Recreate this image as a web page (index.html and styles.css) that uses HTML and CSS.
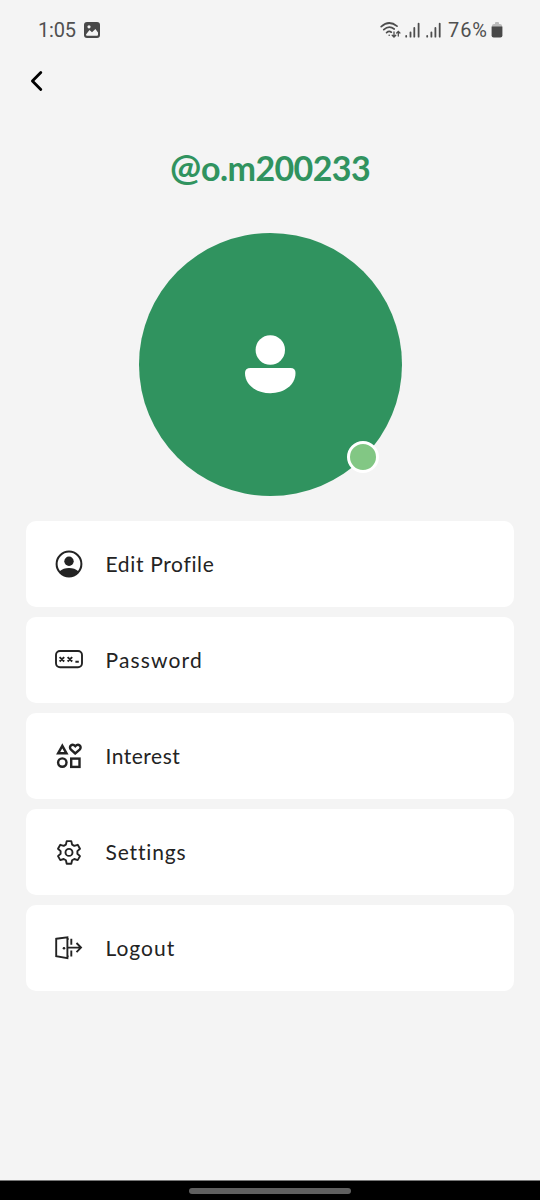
FILE: index.html
```html
<!DOCTYPE html>
<html lang="en">
<head>
<meta charset="utf-8">
<title>Profile</title>
<link rel="stylesheet" href="styles.css">
</head>
<body>
<div class="screen">
  <header class="status">
    <span class="clock">1:05</span>
    <svg class="photo" width="16" height="16" viewBox="0 0 16 16"><rect width="16" height="16" rx="3" fill="#494949"/><circle cx="5" cy="4.8" r="1.6" fill="#f4f4f4"/><path d="M2 12.5 5.5 8l2.5 2.3L11.4 7l2.6 3.5v2.2q0 1-1 1H3q-1 0-1-1.2Z" fill="#f4f4f4"/></svg>
    <svg class="signals" width="63" height="20" viewBox="0 0 63 20" fill="none" stroke="#4d4d4d" stroke-width="1.7" stroke-linecap="round">
      <path d="M1.2 6.6Q9-.4 17 6.2M3.8 9.7Q9 5 14.2 9M6.6 12.6Q9.1 10.6 11.3 12.2"/>
      <circle cx="9.2" cy="15.2" r=".8" fill="#4d4d4d" stroke="none"/>
      <path d="M14 12v5m-1.8-1.7L14 17l1.8-1.7M18.3 16v-4.5m-1.6 1.5 1.6-1.6 1.6 1.6" stroke-width="1.3"/>
      <path d="M26.2 16v.7M30.5 12.3v4.4M34.3 8v8.7M38.6 3.6v13.1M47.2 16v.7M51.4 12.3v4.4M55.4 8v8.7M59.7 3.6v13.1" stroke-width="1.8"/>
    </svg>
    <span class="percent">76%</span>
    <svg class="battery" width="12" height="16" viewBox="0 0 12 16"><path d="M1 5V3.5Q1 2 3 2h1V1q0-1 1-1h2q1 0 1 1v1h1q2 0 2 1.5V5Z" fill="#bababa"/><path d="M.6 4.5h10.8v9q0 2-2 2H2.6q-2 0-2-2Z" fill="#484848"/></svg>
  </header>
  <nav class="back"><svg width="14" height="22" viewBox="0 0 14 22" fill="none" stroke="#000" stroke-width="2.8" stroke-linecap="round" stroke-linejoin="round"><path d="M11.8 2.4 3.4 11l8.4 8.6"/></svg></nav>
  <h1 class="username"><span class="at">@</span>o.m200233</h1>
  <div class="avatar">
    <svg width="51" height="59" viewBox="0 0 51 59" fill="#fff"><circle cx="25.3" cy="15" r="14.7"/><path d="M5.5 33h40q5 0 5 5c0 12-11.5 20.2-25.2 20.2S0 50 0 38q0-5 5.5-5Z"/></svg>
    <span class="presence"></span>
  </div>
  <main class="menu">
    <a class="item"><svg class="icon" viewBox="0 0 30 30" fill="none" stroke="#232323"><circle cx="15" cy="15" r="12.4" stroke-width="2"/><circle cx="15" cy="12.3" r="4.7" fill="#232323" stroke="none"/><path d="M5.2 22.4Q9.5 19 15 19t9.8 3.4Q21 27.5 15 27.5T5.2 22.4Z" fill="#232323" stroke="none"/></svg><span class="label edit">Edit Profile</span></a>
    <a class="item"><svg class="icon" viewBox="0 0 30 30" fill="none" stroke="#232323" stroke-width="1.9"><rect x="2" y="6" width="26" height="16.3" rx="4"/><path d="m5.6 12.1 4.6 4.4m0-4.4-4.6 4.4m8-4.4 4.6 4.4m0-4.4-4.6 4.4m7.8.2h3.4"/></svg><span class="label password">Password</span></a>
    <a class="item"><svg class="icon" viewBox="0 0 30 30" fill="none" stroke="#232323" stroke-width="2.4"><path d="M8.3 4.8 4.1 12.3h8.4Z"/><path d="M21.3 12.5 17 8.6c-3-3.2 1.2-6.5 4.3-3.4 3.1-3.1 7.3.2 4.3 3.4Z"/><circle cx="8.3" cy="21.6" r="4.2"/><rect x="17.2" y="17.6" width="8.3" height="8.3"/></svg><span class="label interest">Interest</span></a>
    <a class="item"><svg class="icon" viewBox="0 0 30 30" fill="none" stroke="#232323" stroke-width="1.9" stroke-linejoin="round"><path d="M12.7 4.1h4.6l.8 3.5 2.2 1.3 3.4-1.1L26 11.7l-2.6 2.4v2.6l2.6 2.4-2.3 4-3.4-1.1-2.2 1.3-.8 3.4h-4.6l-.8-3.4L9.7 22l-3.4 1.1-2.3-4 2.6-2.4v-2.6L4 11.7l2.3-3.9 3.4 1.1 2.2-1.3Z"/><circle cx="15" cy="15.4" r="3.5"/></svg><span class="label settings">Settings</span></a>
    <a class="item"><svg class="icon" viewBox="0 0 30 30" fill="none" stroke="#232323" stroke-width="1.9"><path d="M2.2 5.8 13.4 4.4v20.8L2.2 23.3ZM13.4 6h1.3M13.4 23.4h1.3M17.3 5.7v6M17.3 17.5v5.9M14 14.6h13M22.5 10l4.5 4.6-4.5 4.6"/><circle cx="10" cy="15.2" r="1.3" fill="#232323" stroke="none"/></svg><span class="label logout">Logout</span></a>
  </main>
  <footer class="gesture"><span class="handle"></span></footer>
</div>
</body>
</html>
```

FILE: styles.css
```css
* { box-sizing: border-box; }
body { margin: 0; background: #f4f4f4; font-family: Lato, "Liberation Sans", sans-serif; }
svg { display: block; flex: none; }
.screen { width: 540px; height: 1200px; display: flex; flex-direction: column; overflow: hidden; }
.status { height: 60px; padding: 0 37px 0 38px; display: flex; align-items: center; color: #505050; font-family: Roboto, sans-serif; font-size: 20px; }
.clock { width: 46px; letter-spacing: -.2px; }
.signals { margin-left: auto; margin-right: 5px; }
.percent { width: 43px; white-space: nowrap; letter-spacing: .9px; }
.back { height: 41px; padding-left: 29px; display: flex; align-items: center; }
.username { height: 60px; margin: 37px 0 0; text-align: center; color: #30935f; font-size: 34px; line-height: 60px; font-weight: 700; letter-spacing: -.6px; }
.at { font-size: 37px; letter-spacing: 0; line-height: 1; }
.avatar { position: relative; width: 263px; height: 263px; margin: 35px auto 0 139px; border-radius: 50%; background: #30935f; display: flex; align-items: center; justify-content: center; flex: none; }
.presence { position: absolute; left: 208px; top: 208px; width: 32px; height: 32px; border: 3px solid #fff; border-radius: 50%; background: #82c784; }
.menu { padding: 0 26px; margin-top: 25px; display: flex; flex-direction: column; gap: 10px; }
.item { height: 86px; padding-left: 27.5px; border-radius: 10px; background: #fff; display: flex; align-items: center; gap: 22px; color: #232323; }
.icon { width: 30px; height: 30px; }
.label { font-size: 21px; line-height: 30px; white-space: nowrap; }
.edit { letter-spacing: .65px; }
.password { letter-spacing: 1.15px; }
.interest { letter-spacing: .5px; }
.settings { letter-spacing: .85px; }
.logout { letter-spacing: 1px; }
.gesture { height: 20px; margin-top: auto; background: #000; border-top: 1px solid #777; display: flex; align-items: center; justify-content: center; }
.handle { width: 162px; height: 6px; border-radius: 3px; background: #606060; }
```
